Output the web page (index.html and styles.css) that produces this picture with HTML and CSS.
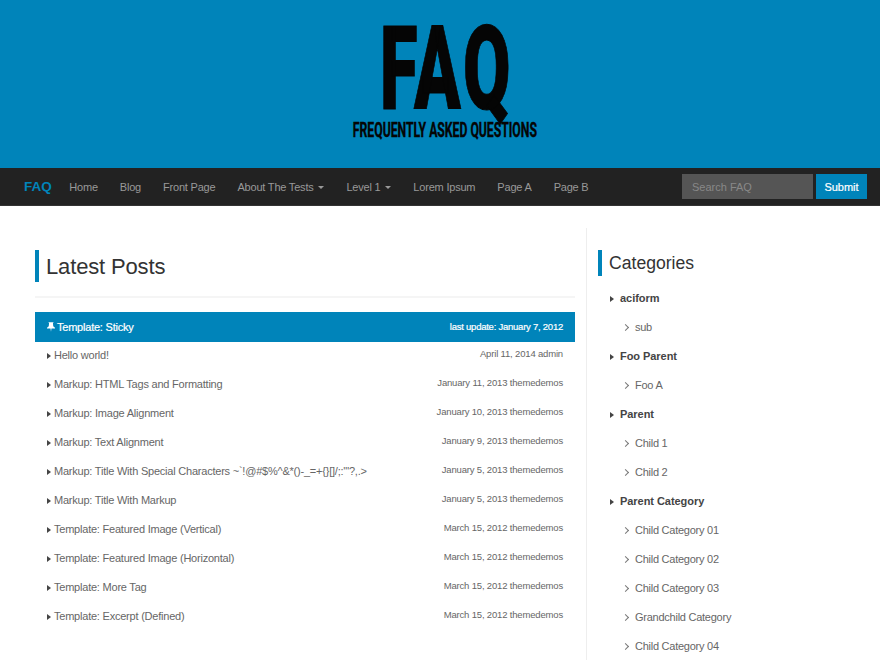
FILE: index.html
```html
<!DOCTYPE html>
<html lang="en">
<head>
<meta charset="utf-8">
<title>FAQ</title>
<link rel="stylesheet" href="styles.css">
</head>
<body>
<header class="banner">
  <div class="logo-big">FAQ</div>
  <div class="logo-sub">FREQUENTLY ASKED QUESTIONS</div>
</header>
<nav class="navbar">
  <a class="brand">FAQ</a>
  <a class="nav-link">Home</a>
  <a class="nav-link">Blog</a>
  <a class="nav-link">Front Page</a>
  <a class="nav-link">About The Tests <i class="caret"></i></a>
  <a class="nav-link">Level 1 <i class="caret"></i></a>
  <a class="nav-link">Lorem Ipsum</a>
  <a class="nav-link">Page A</a>
  <a class="nav-link">Page B</a>
  <form class="search">
    <input class="search-input" placeholder="Search FAQ">
    <button class="search-btn" type="button">Submit</button>
  </form>
</nav>
<div class="page">
  <main class="main">
    <h1 class="main-title">Latest Posts</h1>
    <hr class="rule">
    <ul class="posts">
      <li class="post sticky"><span class="post-title"><svg class="pin" viewBox="0 0 10 12"><path d="M2 0h6v1H7.4l.4 4L10 7v1H5.6L5 12 4.4 8H0V7l2.2-2 .4-4H2z" fill="#fff"/></svg>Template: Sticky</span><span class="post-meta">last update: January 7, 2012</span></li>
      <li class="post"><span class="post-title"><i class="arrow"></i>Hello world!</span><span class="post-meta">April 11, 2014 admin</span></li>
      <li class="post"><span class="post-title"><i class="arrow"></i>Markup: HTML Tags and Formatting</span><span class="post-meta">January 11, 2013 themedemos</span></li>
      <li class="post"><span class="post-title"><i class="arrow"></i>Markup: Image Alignment</span><span class="post-meta">January 10, 2013 themedemos</span></li>
      <li class="post"><span class="post-title"><i class="arrow"></i>Markup: Text Alignment</span><span class="post-meta">January 9, 2013 themedemos</span></li>
      <li class="post"><span class="post-title"><i class="arrow"></i>Markup: Title With Special Characters ~`!@#$%^&amp;*()-_=+{}[]/;:'"?,.&gt;</span><span class="post-meta">January 5, 2013 themedemos</span></li>
      <li class="post"><span class="post-title"><i class="arrow"></i>Markup: Title With Markup</span><span class="post-meta">January 5, 2013 themedemos</span></li>
      <li class="post"><span class="post-title"><i class="arrow"></i>Template: Featured Image (Vertical)</span><span class="post-meta">March 15, 2012 themedemos</span></li>
      <li class="post"><span class="post-title"><i class="arrow"></i>Template: Featured Image (Horizontal)</span><span class="post-meta">March 15, 2012 themedemos</span></li>
      <li class="post"><span class="post-title"><i class="arrow"></i>Template: More Tag</span><span class="post-meta">March 15, 2012 themedemos</span></li>
      <li class="post"><span class="post-title"><i class="arrow"></i>Template: Excerpt (Defined)</span><span class="post-meta">March 15, 2012 themedemos</span></li>
    </ul>
  </main>
  <aside class="side">
    <h2 class="side-title">Categories</h2>
    <ul class="cats">
      <li class="cat parent"><i class="arrow"></i>aciform</li>
      <li class="cat child"><i class="chev"></i>sub</li>
      <li class="cat parent"><i class="arrow"></i>Foo Parent</li>
      <li class="cat child"><i class="chev"></i>Foo A</li>
      <li class="cat parent"><i class="arrow"></i>Parent</li>
      <li class="cat child"><i class="chev"></i>Child 1</li>
      <li class="cat child"><i class="chev"></i>Child 2</li>
      <li class="cat parent"><i class="arrow"></i>Parent Category</li>
      <li class="cat child"><i class="chev"></i>Child Category 01</li>
      <li class="cat child"><i class="chev"></i>Child Category 02</li>
      <li class="cat child"><i class="chev"></i>Child Category 03</li>
      <li class="cat child"><i class="chev"></i>Grandchild Category</li>
      <li class="cat child"><i class="chev"></i>Child Category 04</li>
    </ul>
  </aside>
</div>
</body>
</html>
```
FILE: styles.css
```css
* { box-sizing: border-box; }
html, body { margin: 0; padding: 0; height: 660px; overflow: hidden; }
body { background: #fff; font-family: "Liberation Sans", Arial, sans-serif; font-size: 11px; color: #666; }
.banner { height: 168px; background: #0084ba; display: flex; flex-direction: column; align-items: center; color: #050505; overflow: hidden; padding-left: 10px; }
.logo-big { font-family: Roboto, sans-serif; font-weight: 900; font-size: 116px; line-height: 84px; height: 84px; margin-top: 27px; margin-left: 3px; transform: scaleX(0.592); -webkit-text-stroke: 1px #050505; letter-spacing: 5px; white-space: nowrap; }
.logo-sub { font-family: Roboto, sans-serif; font-weight: 700; font-size: 20px; line-height: 16px; margin-top: 11px; transform: scaleX(0.61); -webkit-text-stroke: 0.4px #050505; white-space: nowrap; }
.navbar { height: 38px; background: #222; border-bottom: 1px solid #333; display: flex; align-items: center; padding-left: 24px; padding-right: 13px; }
.brand { color: #0084ba; font-weight: 700; font-size: 13.5px; margin-right: 17.5px; }
.nav-link { color: #999; font-size: 11px; letter-spacing: -0.2px; margin-right: 22px; white-space: nowrap; }
.caret { display: inline-block; width: 0; height: 0; border: 3px solid transparent; border-top-color: #999; border-bottom: 0; vertical-align: middle; margin-left: 2px; }
.search { margin-left: auto; display: flex; gap: 3px; }
.search-input { width: 131px; height: 25px; background: #555; border: 0; padding: 0 10px; font: 11px "Liberation Sans", Arial, sans-serif; color: #999; }
.search-input::placeholder { color: #888; opacity: 1; }
.search-btn { width: 51px; height: 25px; background: #0084ba; border: 0; padding: 0; color: #fff; font: 11px "Liberation Sans", Arial, sans-serif; -webkit-text-stroke: 0.2px #fff; }
.page { display: flex; padding-left: 35px; padding-top: 22px; height: 454px; }
.main { width: 540px; padding-top: 22px; }
.main-title { margin: 0; height: 32px; border-left: 4px solid #0084ba; padding-left: 7px; font-weight: 400; font-size: 22px; line-height: 33px; letter-spacing: -0.15px; color: #333; }
.rule { border: 0; height: 2px; background: #f5f5f5; margin: 14px 0 14px; }
.posts { list-style: none; margin: 0; padding: 0; }
.post { height: 29px; padding: 0 12px; display: flex; justify-content: space-between; align-items: flex-start; }
.post-title { white-space: nowrap; line-height: 26px; letter-spacing: -0.22px; }
.post-meta { font-size: 9.5px; line-height: 24px; letter-spacing: -0.17px; white-space: nowrap; }
.sticky { height: 30px; background: #0084ba; color: #fff; }
.sticky .post-title { line-height: 30px; -webkit-text-stroke: 0.2px #fff; }
.sticky .post-meta { line-height: 30px; color: #fff; letter-spacing: -0.24px; -webkit-text-stroke: 0.2px #fff; }
.pin { width: 8px; height: 10px; margin-right: 2px; vertical-align: -1px; }
.arrow { display: inline-block; width: 0; height: 0; border: 3.5px solid transparent; border-left: 4px solid #444; border-right: 0; margin-right: 3px; }
.chev { display: inline-block; width: 5px; height: 5px; border-top: 1px solid #777; border-right: 1px solid #777; transform: rotate(45deg); margin-right: 7px; margin-bottom: 1px; }
.side { margin-left: 11px; width: 294px; border-left: 1px solid #eee; padding-left: 11px; padding-top: 22px; height: 454px; overflow: hidden; }
.side-title { margin: 0; height: 26px; border-left: 4px solid #0084ba; padding-left: 7px; font-weight: 400; font-size: 17.6px; line-height: 26px; color: #333; }
.cats { list-style: none; margin: 8px 0 0; padding: 0; }
.cat { height: 29px; line-height: 29px; white-space: nowrap; letter-spacing: -0.25px; }
.parent { font-weight: 700; color: #444; padding-left: 12px; letter-spacing: -0.05px; }
.parent .arrow { margin-right: 6px; }
.child { padding-left: 25px; }
```
